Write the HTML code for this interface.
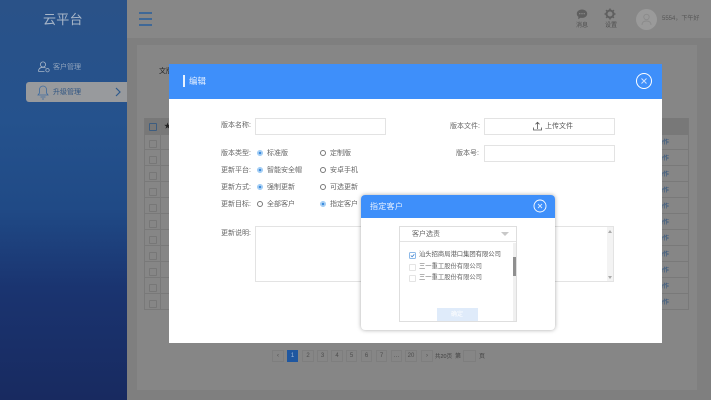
<!DOCTYPE html>
<html lang="zh"><head><meta charset="utf-8"><title>云平台</title>
<style>
html,body{margin:0;padding:0;width:711px;height:400px;overflow:hidden;background:#858585}
body{font-family:"Liberation Sans","Noto Sans CJK SC",sans-serif;font-size:7px;color:#555;position:relative}
.a{position:absolute;white-space:nowrap}
.t{position:absolute;white-space:nowrap;line-height:10px;height:10px;margin-top:1px;filter:blur(.35px)}
#side{left:0;top:0;width:127px;height:400px;background:linear-gradient(180deg,#2a5288 0,#25528d 30%,#204a86 52%,#1a3470 72%,#182a60 100%)}
.box{position:absolute;box-sizing:border-box;background:#fff;border:1px solid #e3e3e3}
.pg{position:absolute;top:350px;height:12px;box-sizing:border-box;border:1px solid #7e7e7e;color:#4c4c4c;font-size:6px;line-height:10px;text-align:center;filter:blur(.25px)}
.row{position:absolute;left:144px;width:545px;height:16px;box-sizing:border-box;border-bottom:1px solid #797979}
.cb{position:absolute;left:149px;width:6px;height:6px;border:1px solid #777;border-radius:1px}
.rt{position:absolute;left:657px;font-size:6px;color:#1f4a7c;line-height:8px;filter:blur(.3px)}
.rad{position:absolute;width:6px;height:6px;box-sizing:border-box;border:1px solid #777;border-radius:50%;background:#fff}
.rad.on{border:1px solid #9ccbf5;background:#3d8ee0;box-shadow:inset 0 0 0 .5px #fff}
.lb{color:#666}
</style></head><body>
<div class="a" id="side"></div>
<div class="t" style="left:43px;top:11px;font-size:13px;line-height:15px;height:15px;color:#a8b6c8;letter-spacing:.3px">云平台</div>
<svg class="a" style="left:37px;top:60px" width="14" height="14" viewBox="0 0 14 14" fill="none" stroke="#a8b6c8" stroke-width=".8"><circle cx="6" cy="4.500" r="2.600"/><path d="M1.500 11.500c0-3 2-4.200 4.500-4.200 1 0 2 .2 2.700.8M1.500 11.500h6"/><circle cx="10.500" cy="10.200" r="1.700"/></svg>
<div class="t" style="left:53px;top:62px;color:#93a5bd">客户管理</div>
<div class="a" style="left:26px;top:82px;width:101px;height:20px;background:#989a9d;border-radius:3px 0 0 3px"></div>
<svg class="a" style="left:36px;top:84px" width="14" height="16" viewBox="0 0 14 16" fill="none" stroke="#3c6ba0" stroke-width=".8"><path d="M7 2c2.500 0 3.500 2 3.500 4v3l1.500 2H2l1.500-2V6C3.500 4 4.500 2 7 2z"/><path d="M4.500 13h5M6 15h2"/></svg>
<div class="t" style="left:53px;top:87px;color:#2e5482">升级管理</div>
<svg class="a" style="left:114px;top:87px" width="8" height="10" viewBox="0 0 8 10" fill="none" stroke="#2e5a8c" stroke-width="1.200"><path d="M2 1l4 4-4 4"/></svg>

<div class="a" style="left:127px;top:0;width:584px;height:38px;background:#878787"></div>
<div class="a" style="left:127px;top:38px;width:584px;height:362px;background:#7f7f7f"></div>
<div class="a" style="left:137px;top:45px;width:560px;height:345px;background:#868686"></div>
<div class="a" style="left:139px;top:12px;width:13px;height:1.500px;background:#3f6897;box-shadow:0 6px 0 #3f6897,0 12px 0 #3f6897"></div>

<svg class="a" style="left:576px;top:9px" width="12" height="11" viewBox="0 0 12 11"><path d="M6 .5c3 0 5.200 1.800 5.200 4.200S9 8.900 6 8.900c-.6 0-1 0-1.500-.2L2.200 10.300l.2-2.500C1.300 7 .8 5.900.8 4.700.8 2.300 3 .5 6 .5z" fill="#5f5f5f"/><circle cx="3.800" cy="4.700" r=".6" fill="#999"/><circle cx="6" cy="4.700" r=".6" fill="#999"/><circle cx="8.200" cy="4.700" r=".6" fill="#999"/></svg>
<div class="t" style="left:576px;top:20px;font-size:6px;color:#4e4e4e">消息</div>
<svg class="a" style="left:604px;top:8px" width="12" height="12" viewBox="0 0 12 12"><circle cx="6" cy="6" r="3.500" fill="none" stroke="#5f5f5f" stroke-width="2"/><path d="M6 .5v2M6 9.500v2M.5 6h2M9.500 6h2M2.100 2.100l1.400 1.400M8.500 8.500l1.400 1.400M2.100 9.900l1.400-1.400M8.500 3.500l1.400-1.400" stroke="#5f5f5f" stroke-width="1.500"/></svg>
<div class="t" style="left:605px;top:20px;font-size:6px;color:#4e4e4e">设置</div>
<div class="a" style="left:636px;top:9px;width:21px;height:21px;border-radius:50%;background:#9a9a9a"></div>
<svg class="a" style="left:641px;top:13px" width="11" height="13" viewBox="0 0 11 13" fill="none" stroke="#8b8b8b" stroke-width=".9"><circle cx="5.500" cy="4" r="2.700"/><path d="M1 12c0-3 2-4 4.500-4s4.500 1 4.500 4"/></svg>
<div class="t" style="left:662px;top:13px;font-size:6px;color:#565656">5554，下午好</div>

<div class="t" style="left:159px;top:66px;color:#222">文版</div>
<div class="a" style="left:144px;top:118px;width:545px;height:17px;background:#787878"></div>
<div class="a" style="left:144px;top:118px;width:17px;height:192px;border-left:1px solid #797979;border-right:1px solid #797979;box-sizing:border-box"></div>
<div class="row" style="top:134px"></div><div class="row" style="top:150px"></div><div class="row" style="top:166px"></div><div class="row" style="top:182px"></div><div class="row" style="top:198px"></div><div class="row" style="top:214px"></div><div class="row" style="top:230px"></div><div class="row" style="top:246px"></div><div class="row" style="top:262px"></div><div class="row" style="top:278px"></div><div class="row" style="top:294px"></div>
<div class="a" style="left:688px;top:118px;width:1px;height:192px;background:#797979"></div>
<div class="cb" style="top:123px;border-color:#3d5d80"></div>
<div class="cb" style="top:140px"></div><div class="cb" style="top:156px"></div><div class="cb" style="top:172px"></div><div class="cb" style="top:188px"></div><div class="cb" style="top:204px"></div><div class="cb" style="top:220px"></div><div class="cb" style="top:236px"></div><div class="cb" style="top:252px"></div><div class="cb" style="top:268px"></div><div class="cb" style="top:284px"></div><div class="cb" style="top:300px"></div>
<div class="t" style="left:164px;top:121px;color:#222">★</div>
<div class="rt" style="top:139px">操作</div><div class="rt" style="top:155px">操作</div><div class="rt" style="top:171px">操作</div><div class="rt" style="top:187px">操作</div><div class="rt" style="top:203px">操作</div><div class="rt" style="top:219px">操作</div><div class="rt" style="top:235px">操作</div><div class="rt" style="top:251px">操作</div><div class="rt" style="top:267px">操作</div><div class="rt" style="top:283px">操作</div><div class="rt" style="top:299px">操作</div>

<div class="pg" style="left:272px;width:12px">‹</div>
<div class="pg" style="left:287px;width:11px;background:#1f57a0;border-color:#1f57a0;color:#9fb8d8">1</div>
<div class="pg" style="left:302px;width:12px">2</div>
<div class="pg" style="left:317px;width:11px">3</div>
<div class="pg" style="left:331px;width:12px">4</div>
<div class="pg" style="left:346px;width:11px">5</div>
<div class="pg" style="left:361px;width:11px">6</div>
<div class="pg" style="left:376px;width:11px">7</div>
<div class="pg" style="left:391px;width:11px">…</div>
<div class="pg" style="left:405px;width:12px">20</div>
<div class="pg" style="left:421px;width:12px">›</div>
<div class="t" style="left:435px;top:351px;font-size:5.500px;color:#3f3f3f">共20页</div>
<div class="t" style="left:455px;top:351px;font-size:6px;color:#3f3f3f">第</div>
<div class="pg" style="left:463px;width:13px"></div>
<div class="t" style="left:479px;top:351px;font-size:6px;color:#3f3f3f">页</div>

<!-- main modal -->
<div class="a" style="left:169px;top:64px;width:493px;height:279px;background:#fff"></div>
<div class="a" style="left:169px;top:64px;width:493px;height:35px;background:#3e8ffa"></div>
<div class="a" style="left:183px;top:75px;width:2px;height:12px;background:#e8f2ff"></div>
<div class="t" style="left:189px;top:74px;font-size:8.500px;line-height:12px;height:12px;color:#e8f1ff">编辑</div>
<svg class="a" style="left:635px;top:72px" width="18" height="18" viewBox="0 0 18 18" fill="none" stroke="#fff"><circle cx="9" cy="9" r="7.500"/><path d="M6.500 6.500l5 5M11.500 6.500l-5 5" stroke="#cfe2ff"/></svg>

<div class="t lb" style="left:221px;top:120px">版本名称:</div>
<div class="box" style="left:255px;top:118px;width:131px;height:17px"></div>
<div class="t lb" style="left:450px;top:121px">版本文件:</div>
<div class="box" style="left:484px;top:118px;width:131px;height:17px"></div>
<svg class="a" style="left:533px;top:121px" width="9" height="10" viewBox="0 0 9 10" fill="none" stroke="#555" stroke-width=".8"><path d="M4.500 8V1.500M2.500 3.300l2-2 2 2M.5 6.500v2.500h8V6.500"/></svg>
<div class="t" style="left:545px;top:121px;color:#555">上传文件</div>
<div class="t lb" style="left:456px;top:148px">版本号:</div>
<div class="box" style="left:484px;top:145px;width:131px;height:17px"></div>

<div class="t lb" style="left:221px;top:148px">版本类型:</div>
<div class="rad on" style="left:257px;top:150px"></div><div class="t" style="left:267px;top:148px;color:#666">标准版</div>
<div class="rad" style="left:320px;top:150px"></div><div class="t" style="left:330px;top:148px;color:#666">定制版</div>
<div class="t lb" style="left:221px;top:165px">更新平台:</div>
<div class="rad on" style="left:257px;top:167px"></div><div class="t" style="left:267px;top:165px;color:#666">智能安全帽</div>
<div class="rad" style="left:320px;top:167px"></div><div class="t" style="left:330px;top:165px;color:#666">安卓手机</div>
<div class="t lb" style="left:221px;top:182px">更新方式:</div>
<div class="rad on" style="left:257px;top:184px"></div><div class="t" style="left:267px;top:182px;color:#666">强制更新</div>
<div class="rad" style="left:320px;top:184px"></div><div class="t" style="left:330px;top:182px;color:#666">可选更新</div>
<div class="t lb" style="left:221px;top:199px">更新目标:</div>
<div class="rad" style="left:257px;top:201px"></div><div class="t" style="left:267px;top:199px;color:#666">全部客户</div>
<div class="rad on" style="left:320px;top:201px"></div><div class="t" style="left:330px;top:199px;color:#666">指定客户</div>
<div class="t lb" style="left:221px;top:228px">更新说明:</div>
<div class="box" style="left:255px;top:226px;width:359px;height:56px"></div>
<div class="a" style="left:607px;top:227px;width:6px;height:54px;background:#f3f3f3"></div>
<div class="a" style="left:608px;top:230px;width:0;height:0;border-left:2.500px solid transparent;border-right:2.500px solid transparent;border-bottom:3px solid #aaa"></div>
<div class="a" style="left:608px;top:276px;width:0;height:0;border-left:2.500px solid transparent;border-right:2.500px solid transparent;border-top:3px solid #aaa"></div>

<!-- small modal -->
<div class="a" style="left:361px;top:195px;width:194px;height:135px;background:#fff;border-radius:4px;box-shadow:0 0 4px rgba(0,0,0,.35)"></div>
<div class="a" style="left:361px;top:195px;width:194px;height:23px;background:#3e8ffa;border-radius:4px 4px 0 0"></div>
<div class="t" style="left:370px;top:201px;font-size:8px;color:#e8f1ff;letter-spacing:.3px">指定客户</div>
<svg class="a" style="left:533px;top:199px" width="14" height="14" viewBox="0 0 14 14" fill="none" stroke="#fff" stroke-width=".9"><circle cx="7" cy="7" r="6"/><path d="M5 5l4 4M9 5l-4 4" stroke="#d8e8ff"/></svg>
<div class="box" style="left:399px;top:226px;width:118px;height:96px;border-color:#dedede"></div>
<div class="a" style="left:400px;top:241px;width:116px;height:1px;background:#e3e3e3"></div>
<div class="t" style="left:412px;top:229px;color:#666">客户选责</div>
<div class="a" style="left:501px;top:232px;width:0;height:0;border-left:4px solid transparent;border-right:4px solid transparent;border-top:4px solid #c8c8c8"></div>
<div class="a" style="left:513px;top:243px;width:3px;height:78px;background:#f0f0f0"></div>
<div class="a" style="left:513px;top:257px;width:3px;height:19px;background:#8f8f8f"></div>
<svg class="a" style="left:409px;top:252px" width="7" height="7" viewBox="0 0 7 7" fill="none"><rect x=".5" y=".5" width="6" height="6" rx="1" stroke="#8db9e8"/><path d="M1.800 3.500l1.300 1.300 2.200-2.500" stroke="#3d82d0" stroke-width=".8"/></svg>
<div class="a" style="left:409px;top:264px;width:5px;height:5px;border:1px solid #e4e4e4;border-radius:1px"></div>
<div class="a" style="left:409px;top:275px;width:5px;height:5px;border:1px solid #e4e4e4;border-radius:1px"></div>
<div class="t" style="left:419px;top:249px;font-size:6.300px;color:#555">汕头招商局港口集团有限公司</div>
<div class="t" style="left:419px;top:261px;font-size:6.300px;color:#666">三一重工股份有限公司</div>
<div class="t" style="left:419px;top:272px;font-size:6.300px;color:#666">三一重工股份有限公司</div>
<div class="a" style="left:437px;top:308px;width:41px;height:13px;background:#dfebfa"></div>
<div class="t" style="left:451px;top:309px;font-size:6px;color:#fff">确定</div>
</body></html>
